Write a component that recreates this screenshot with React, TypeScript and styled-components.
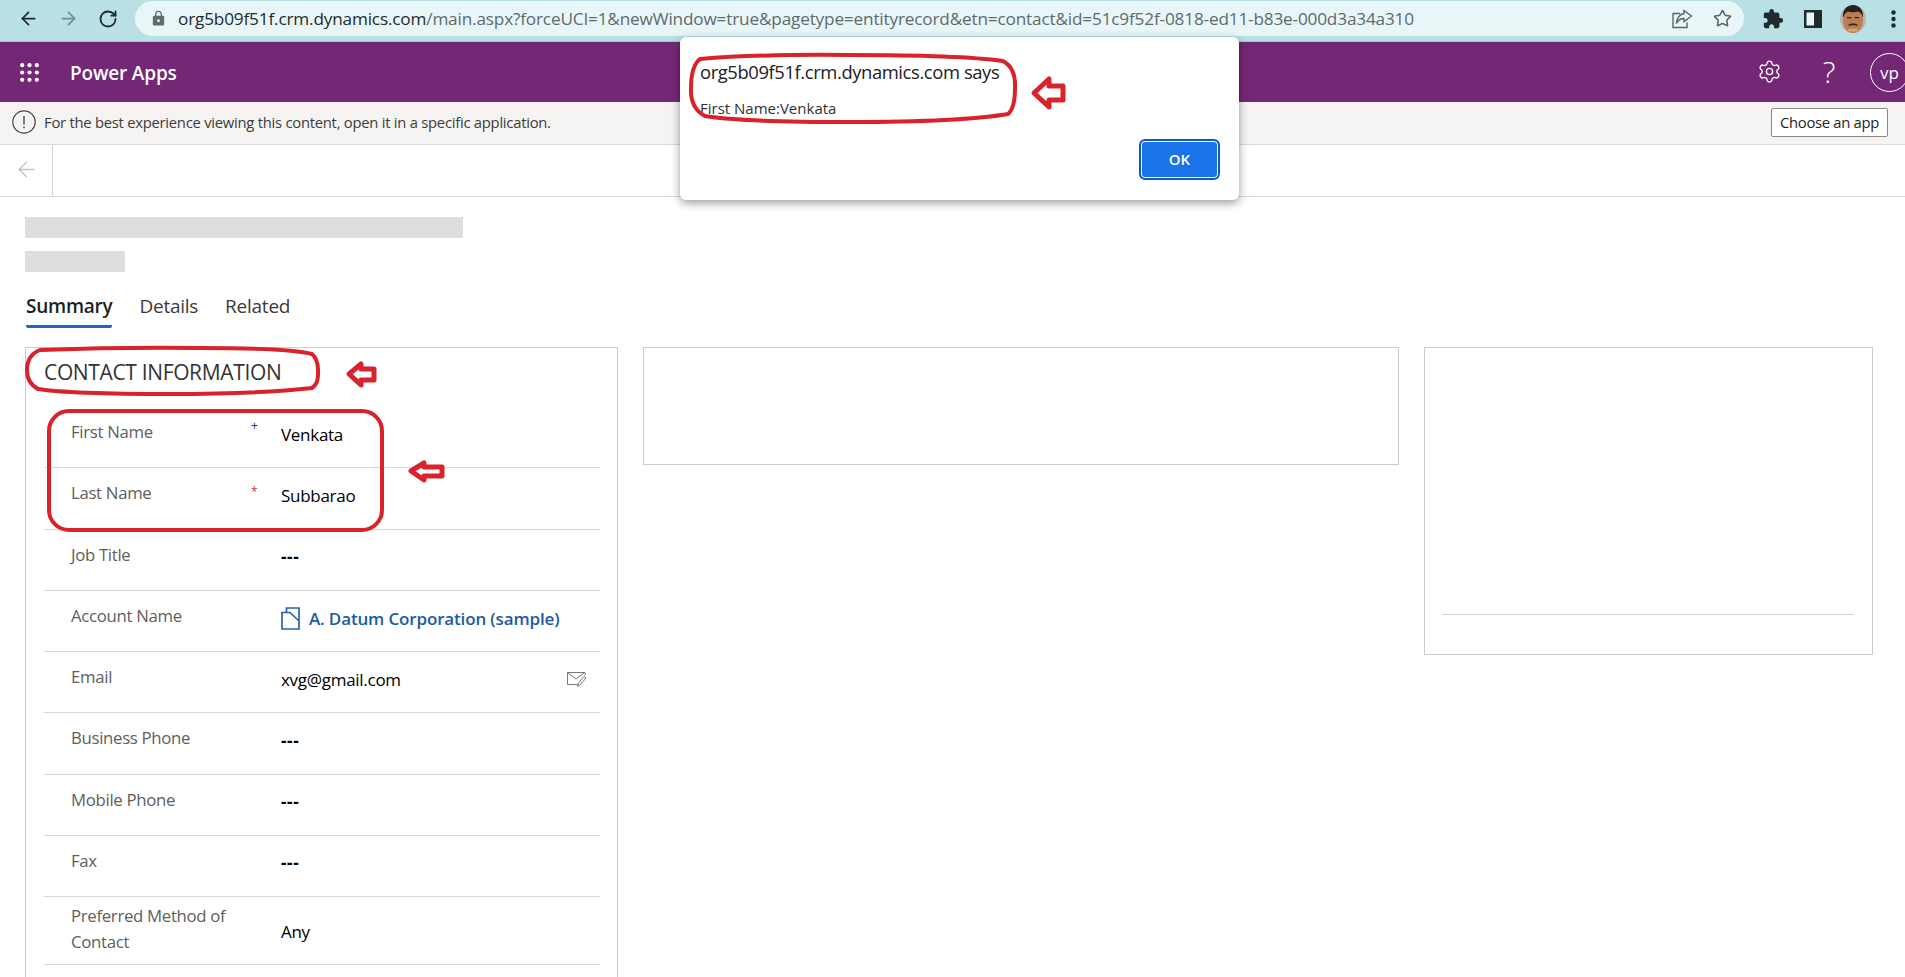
import React from 'react'
import styled, { createGlobalStyle } from 'styled-components'
import { ArrowLeft, ArrowRight, RotateCw, Star, Settings } from 'lucide-react'
import { MdExtension, MdLock } from 'react-icons/md'

const GlobalStyle = createGlobalStyle`
  html, body {
    margin: 0;
    padding: 0;
    height: 100%;
    background: #fff;
    overflow: hidden;
  }
  body {
    font-family: "Open Sans", "Noto Sans", "Liberation Sans", sans-serif;
    color: #323130;
  }
`

const Page = styled.div`
  position: relative;
  width: 100%;
  height: 977px;
  overflow: hidden;
  background: #fff;
`

const BrowserBar = styled.div`
  display: flex;
  align-items: flex-start;
  height: 42px;
  box-sizing: border-box;
  padding: 1px 0 0 8px;
  background: #b9e0e5;
  border-bottom: 1px solid #a9c3cc;
`

const NavButton = styled.div<{ $muted?: boolean }>`
  flex: none;
  width: 40px;
  height: 35px;
  display: flex;
  align-items: center;
  justify-content: center;
  color: ${props => (props.$muted ? '#6f8f95' : '#1d2a2e')};
`

const Omnibox = styled.div`
  flex: 1;
  height: 35px;
  margin-left: 7px;
  padding: 0 2px 0 15px;
  display: flex;
  align-items: center;
  border-radius: 18px;
  background: #e9f6f8;
  min-width: 0;
`

const LockWrap = styled.span`
  display: flex;
  width: 28px;
  color: #5f6b6e;
`

const Url = styled.div`
  flex: 1;
  font-size: 17.2px;
  letter-spacing: -0.17px;
  white-space: nowrap;
  color: #5f6a6d;
  overflow: hidden;
`

const Host = styled.span`
  color: #1f2a2e;
`

const OmniIcon = styled.span`
  display: flex;
  width: 40px;
  justify-content: center;
  color: #5a6568;
`

const BrowserTools = styled.div`
  display: flex;
  margin: 0 -8px 0 9px;
`

const AppHeader = styled.header`
  display: flex;
  align-items: center;
  height: 60px;
  padding-left: 20px;
  background: #742774;
  color: #fff;
  overflow: hidden;
`

const AppName = styled.div`
  margin: 2px 0 0 31px;
  font-size: 19px;
  font-weight: 600;
  letter-spacing: -0.17px;
`

const HeaderTools = styled.div`
  margin-left: auto;
  margin-right: -4px;
  display: flex;
  align-items: center;
`

const HelpMark = styled.div`
  width: 30px;
  margin: 0 26px 0 32px;
  text-align: center;
  font-size: 30px;
  font-weight: 300;
  line-height: 32px;
`

const GearWrap = styled.span`
  display: flex;
  margin-left: 1px;
  margin-bottom: 1px;
`

const Initials = styled.div`
  width: 37px;
  height: 37px;
  border: 1.5px solid #fff;
  border-radius: 50%;
  display: flex;
  align-items: center;
  justify-content: center;
  font-size: 17px;
`

const Notice = styled.div`
  display: flex;
  align-items: center;
  height: 43px;
  box-sizing: border-box;
  padding: 0 17px 2px 12px;
  background: #f6f4f3;
  border-bottom: 1px solid #d9d9d9;
  font-size: 14.8px;
  letter-spacing: -0.255px;
  color: #3c3b3a;
`

const NoticeText = styled.span`
  margin-left: 8px;
`

const ChooseButton = styled.button`
  margin-left: auto;
  width: 117px;
  height: 29px;
  padding: 0;
  background: #fff;
  border: 1px solid #8a8886;
  border-radius: 2px;
  font: inherit;
  font-size: 14.8px;
  letter-spacing: -0.3px;
  color: #201f1e;
`

const CommandBar = styled.div`
  display: flex;
  height: 52px;
  box-sizing: border-box;
  border-bottom: 1px solid #d9d9d9;
`

const BackCell = styled.div`
  width: 53px;
  display: flex;
  align-items: center;
  justify-content: center;
  padding-bottom: 2px;
  box-sizing: border-box;
  border-right: 1px solid #d4d4d4;
  color: #c8c6c4;
`

const Content = styled.main`
  padding: 20px 25px 0;
`

const Skeleton = styled.div<{ $width: number }>`
  width: ${props => props.$width}px;
  height: 21px;
  margin-bottom: 13px;
  background: #dfdedc;
`

const Tabs = styled.nav`
  display: flex;
  gap: 27px;
  margin: 20px 0 19px 1px;
`

const Tab = styled.div<{ $active?: boolean }>`
  height: 36px;
  box-sizing: border-box;
  line-height: 28px;
  font-size: 19px;
  letter-spacing: -0.25px;
  font-weight: ${props => (props.$active ? 600 : 400)};
  color: ${props => (props.$active ? '#201f1e' : '#3b3a39')};
  border-bottom: 3px solid ${props => (props.$active ? '#2b63b8' : 'transparent')};
  border-radius: 0 0 2px 2px;
`

const Columns = styled.div`
  display: grid;
  grid-template-columns: 593px 756px 449px;
  gap: 25px;
  align-items: start;
`

const Card = styled.section<{ $height?: number }>`
  box-sizing: border-box;
  border: 1px solid #cccccc;
  background: #fff;
  height: ${props => (props.$height ? `${props.$height}px` : 'auto')};
`

const FormCard = styled(Card)`
  padding: 0 17px 40px 18px;
`

const SectionTitle = styled.h2`
  margin: 0;
  height: 59px;
  box-sizing: border-box;
  padding-top: 7px;
  line-height: 34px;
  font-size: 21px;
  font-weight: 400;
  letter-spacing: -0.35px;
  color: #333;
`

const Row = styled.div<{ $tall?: boolean }>`
  display: grid;
  grid-template-columns: 183px 27px 1fr;
  height: ${props => (props.$tall ? 68 : 61.25)}px;
  box-sizing: border-box;
  padding: ${props => (props.$tall ? 6 : 12)}px 14px 0 27px;
  border-bottom: 1px solid #d8d8d8;
`

const Label = styled.div`
  font-size: 16.8px;
  line-height: 26px;
  letter-spacing: -0.32px;
  color: #605e5c;
`

const Mark = styled.span<{ $color: string; $offset?: number }>`
  font-size: 12px;
  line-height: 14px;
  margin: ${props => props.$offset ?? 0}px 0 0 -3px;
  color: ${props => props.$color};
`

const Value = styled.div<{ $tall?: boolean }>`
  display: flex;
  align-items: center;
  justify-content: space-between;
  height: 26px;
  margin-top: ${props => (props.$tall ? 15 : 2)}px;
  font-size: 17px;
  font-weight: 500;
  letter-spacing: -0.28px;
  color: #000;
`

const EmptyValue = styled.span`
  font-weight: 700;
  letter-spacing: 0.6px;
`

const AccountLink = styled.a`
  display: flex;
  align-items: center;
  gap: 9px;
  margin-top: 2px;
  color: #1c5aa6;
  font-weight: 600;
  letter-spacing: -0.15px;
  text-decoration: none;
`

const SidePanelRule = styled.div`
  margin: 266px 18px 0 17px;
  border-top: 1px solid #d2d2d2;
`

const AlertBox = styled.div`
  position: absolute;
  left: 680px;
  top: 37px;
  width: 559px;
  height: 163px;
  box-sizing: border-box;
  padding: 22px 19px 20px 20px;
  display: flex;
  flex-direction: column;
  background: #fff;
  border-radius: 6px;
  box-shadow: 0 3px 10px rgba(0, 0, 0, 0.4);
`

const AlertTitle = styled.div`
  font-size: 18.4px;
  line-height: 26px;
  letter-spacing: -0.4px;
  color: #202124;
`

const AlertMessage = styled.div`
  margin-top: 13px;
  font-size: 15px;
  line-height: 20px;
  color: #303134;
`

const OkButton = styled.button`
  align-self: flex-end;
  margin-top: auto;
  width: 81px;
  height: 41px;
  padding: 0 0 2px;
  background: #1a73e8;
  border: 2px solid #0f5cc0;
  box-shadow: inset 0 0 0 1px #fff;
  border-radius: 6px;
  font: inherit;
  font-size: 15px;
  font-weight: 600;
  color: #fff;
`

const Annotations = styled.svg`
  position: absolute;
  left: 0;
  top: 0;
  pointer-events: none;
  fill: none;
  stroke: #d9222c;
  stroke-width: 4;
  stroke-linejoin: round;
`

const ArrowMark = styled.path`
  stroke-width: 5;
`

const fields = [
  { label: 'First Name', value: 'Venkata', mark: '+', markColor: '#23239a', markOffset: 0 },
  { label: 'Last Name', value: 'Subbarao', mark: '*', markColor: '#c8323a', markOffset: 5 },
  { label: 'Job Title', value: '---' },
  { label: 'Account Name', value: 'A. Datum Corporation (sample)', link: true },
  { label: 'Email', value: 'xvg@gmail.com', email: true },
  { label: 'Business Phone', value: '---' },
  { label: 'Mobile Phone', value: '---' },
  { label: 'Fax', value: '---' },
]

const ShareIcon = () => (
  <svg width="22" height="20" viewBox="0 0 22 20" fill="none" stroke="currentColor" strokeWidth="1.4">
    <path d="M9 4.500H2v14h14v-5" />
    <path d="M13 1.500 20.500 7 13 12.500V9.500C9.500 9.500 7 11 5.500 14.500 5.500 9.500 8.500 5 13 4.500Z" />
  </svg>
)

const PanelIcon = () => (
  <svg width="18" height="18" viewBox="0 0 18 18">
    <path fill="#1d2a2e" d="M0 0h18v18H0z" />
    <path fill="#e9f6f8" d="M2.500 2.500h7.500v13H2.500z" />
  </svg>
)

const AvatarPhoto = () => (
  <svg width="26" height="28" viewBox="0 0 26 28">
    <ellipse cx="13" cy="14" rx="13" ry="14" fill="#b9b3ad" />
    <ellipse cx="13" cy="16" rx="10" ry="12" fill="#b98055" />
    <path fill="#2a211c" d="M3 13C2 5 7 0 13 0s11 5 10 13c-1-4-3-6-5-6.500-3 1-8 1-10 0-2 1-4 3-5 6.500Z" />
    <path fill="#3a261c" d="M7 12h4.500v1.300H7zM14.500 12H19v1.300h-4.500zM8.500 19.500c2-1.500 7-1.500 9 0v1.500c-2-1-7-1-9 0Z" />
    <ellipse cx="13" cy="25" rx="5" ry="1.500" fill="#d9a27c" />
  </svg>
)

const Waffle = () => (
  <svg width="19" height="19" viewBox="0 0 19 19" fill="#fff">
    {[2.2, 9.5, 16.8].flatMap(y =>
      [2.2, 9.5, 16.8].map(x => <circle key={`${x}-${y}`} cx={x} cy={y} r="2.1" />),
    )}
  </svg>
)

const InfoCircle = () => (
  <svg width="24" height="24" viewBox="0 0 24 24" fill="none" stroke="#4a4948" strokeWidth="1.2">
    <circle cx="12" cy="12" r="11.200" />
    <path d="M12 6v8.500M12 16.500v1.800" strokeWidth="1.4" />
  </svg>
)

const AccountIcon = () => (
  <svg width="19" height="23" viewBox="0 0 19 23" fill="none" stroke="#2a62ad" strokeWidth="1.7">
    <path d="M5.500 5.500V1H18V22H1V5.500H9L18 14" />
  </svg>
)

const MailEditIcon = () => (
  <svg width="19" height="15" viewBox="0 0 19 15" fill="none" stroke="#7a7877" strokeWidth="1">
    <path d="M11 12.500H.5V.5h17.500v3" />
    <path d="M.5.500 9 7l8.500-6.500" />
    <path fill="#fff" d="M10.500 14.500l1-3.500 5.500-6.500 2 1.500-5.500 6.500Z" />
  </svg>
)

export default function App() {
  return (
    <Page>
      <GlobalStyle />
      <BrowserBar>
        <NavButton><ArrowLeft size={21} strokeWidth={2} /></NavButton>
        <NavButton $muted><ArrowRight size={21} strokeWidth={2} /></NavButton>
        <NavButton><RotateCw size={20} strokeWidth={2.2} /></NavButton>
        <Omnibox>
          <LockWrap><MdLock size={17} /></LockWrap>
          <Url>
            <Host>org5b09f51f.crm.dynamics.com</Host>
            /main.aspx?forceUCI=1&amp;newWindow=true&amp;pagetype=entityrecord&amp;etn=contact&amp;id=51c9f52f-0818-ed11-b83e-000d3a34a310
          </Url>
          <OmniIcon><ShareIcon /></OmniIcon>
          <OmniIcon><Star size={19} strokeWidth={2} /></OmniIcon>
        </Omnibox>
        <BrowserTools>
          <NavButton><MdExtension size={22} /></NavButton>
          <NavButton><PanelIcon /></NavButton>
          <NavButton><AvatarPhoto /></NavButton>
          <NavButton>
            <svg width="5" height="18" viewBox="0 0 5 18" fill="#1d2a2e">
              <circle cx="2.500" cy="2.500" r="2.200" />
              <circle cx="2.500" cy="9" r="2.200" />
              <circle cx="2.500" cy="15.500" r="2.200" />
            </svg>
          </NavButton>
        </BrowserTools>
      </BrowserBar>

      <AppHeader>
        <Waffle />
        <AppName>Power Apps</AppName>
        <HeaderTools>
          <GearWrap><Settings size={25} strokeWidth={1.3} /></GearWrap>
          <HelpMark>?</HelpMark>
          <Initials>vp</Initials>
        </HeaderTools>
      </AppHeader>

      <Notice>
        <InfoCircle />
        <NoticeText>For the best experience viewing this content, open it in a specific application.</NoticeText>
        <ChooseButton>Choose an app</ChooseButton>
      </Notice>

      <CommandBar>
        <BackCell><ArrowLeft size={25} strokeWidth={1.3} /></BackCell>
      </CommandBar>

      <Content>
        <Skeleton $width={438} />
        <Skeleton $width={100} />
        <Tabs>
          <Tab $active>Summary</Tab>
          <Tab>Details</Tab>
          <Tab>Related</Tab>
        </Tabs>
        <Columns>
          <FormCard>
            <SectionTitle>CONTACT INFORMATION</SectionTitle>
            {fields.map(field => (
              <Row key={field.label}>
                <Label>{field.label}</Label>
                {field.mark ? (
                  <Mark $color={field.markColor} $offset={field.markOffset}>{field.mark}</Mark>
                ) : (
                  <span />
                )}
                <Value>
                  {field.link ? (
                    <AccountLink href="#"><AccountIcon />{field.value}</AccountLink>
                  ) : field.value === '---' ? (
                    <EmptyValue>{field.value}</EmptyValue>
                  ) : (
                    field.value
                  )}
                  {field.email && <MailEditIcon />}
                </Value>
              </Row>
            ))}
            <Row $tall>
              <Label>Preferred Method of Contact</Label>
              <span />
              <Value $tall>Any</Value>
            </Row>
          </FormCard>
          <Card $height={118} />
          <Card $height={308}>
            <SidePanelRule />
          </Card>
        </Columns>
      </Content>

      <AlertBox>
        <AlertTitle>org5b09f51f.crm.dynamics.com says</AlertTitle>
        <AlertMessage>First Name:Venkata</AlertMessage>
        <OkButton>OK</OkButton>
      </AlertBox>

      <Annotations width="1905" height="977" viewBox="0 0 1905 977">
        <path d="M700 59Q760 54 850 55Q960 55 1003 61Q1016 68 1015 88Q1015 108 1008 114Q960 122 850 122Q740 122 705 116Q690 108 691 88Q691 66 700 59Z" />
        <ArrowMark d="M1034 93L1049 79V86H1063V100H1049V107Z" />
        <path d="M40 350Q120 347 200 348Q290 348 312 354Q319 360 318 375Q318 384 312 388Q260 394 170 394Q70 394 38 389Q27 383 27 370Q27 355 40 350Z" />
        <ArrowMark d="M349 374L361 364V369H374V380H361V385Z" />
        <rect x="49" y="411" width="333" height="119" rx="20" />
        <ArrowMark d="M411 471L424 463V467H442V476H424V480Z" />
      </Annotations>
    </Page>
  )
}
